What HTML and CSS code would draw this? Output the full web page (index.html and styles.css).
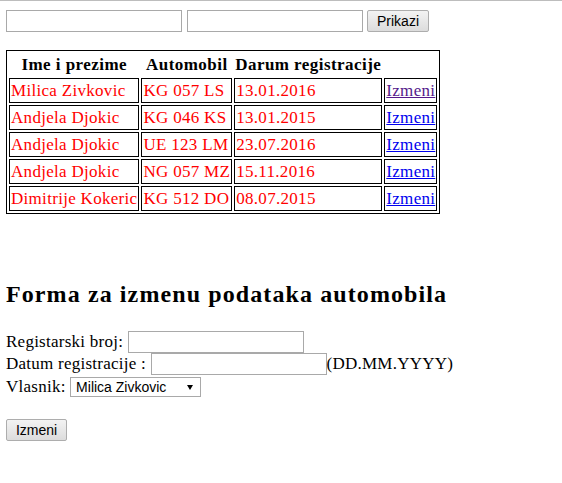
FILE: index.html
```html
<!DOCTYPE html>
<html>
<head>
<meta charset="utf-8">
<title>Automobili</title>
<link rel="stylesheet" href="styles.css">
</head>
<body>
<div class="top">
  <form class="search">
    <input type="text" class="field">
    <input type="text" class="field">
    <button type="button" class="btn btn-show">Prikazi</button>
  </form>
</div>

<table class="cars">
  <tr>
    <th>Ime i prezime</th>
    <th>Automobil</th>
    <th>Darum registracije</th>
    <th></th>
  </tr>
  <tr>
    <td>Milica Zivkovic</td>
    <td>KG 057 LS</td>
    <td>13.01.2016</td>
    <td><a href="#" class="link visited">Izmeni</a></td>
  </tr>
  <tr>
    <td>Andjela Djokic</td>
    <td>KG 046 KS</td>
    <td>13.01.2015</td>
    <td><a href="#" class="link">Izmeni</a></td>
  </tr>
  <tr>
    <td>Andjela Djokic</td>
    <td>UE 123 LM</td>
    <td>23.07.2016</td>
    <td><a href="#" class="link">Izmeni</a></td>
  </tr>
  <tr>
    <td>Andjela Djokic</td>
    <td>NG 057 MZ</td>
    <td>15.11.2016</td>
    <td><a href="#" class="link">Izmeni</a></td>
  </tr>
  <tr>
    <td>Dimitrije Kokeric</td>
    <td>KG 512 DO</td>
    <td>08.07.2015</td>
    <td><a href="#" class="link">Izmeni</a></td>
  </tr>
</table>

<h2 class="title">Forma za izmenu podataka automobila</h2>

<form class="edit">
  <div class="row row1">Registarski broj:&nbsp;<input type="text" class="field"></div>
  <div class="row row2">Datum registracije :&nbsp;<input type="text" class="field">(DD.MM.YYYY)</div>
  <div class="row row3">Vlasnik:&nbsp;<span class="select-wrap"><select class="select"><option>Milica Zivkovic</option><option>Andjela Djokic</option><option>Dimitrije Kokeric</option></select></span></div>
  <div class="actions"><button type="button" class="btn btn-edit">Izmeni</button></div>
</form>
</body>
</html>
```
FILE: styles.css
```css
html, body {
  background: #ffffff;
}
body {
  margin: 0;
  font-family: "Liberation Serif", "Times New Roman", serif;
  font-size: 17px;
  letter-spacing: 0.25px;
  color: #000;
}
.top {
  border-top: 1px solid #bdbdbd;
  padding: 9px 6px 0;
}
.search {
  display: flex;
  align-items: flex-start;
  margin: 0;
}
.field {
  box-sizing: border-box;
  width: 176px;
  height: 22px;
  margin: 0;
  padding: 1px 2px;
  border: 1px solid #a9a9a9;
  border-radius: 0;
  background: #fff;
  font-family: "Liberation Sans", Arial, sans-serif;
  font-size: 14px;
  letter-spacing: 0;
  outline: none;
}
.search .field + .field {
  margin-left: 5px;
}
.btn {
  box-sizing: border-box;
  height: 22px;
  margin: 0;
  padding: 0 6px;
  border: 1px solid #adadad;
  border-radius: 2px;
  background: linear-gradient(#f3f3f3, #dcdcdc);
  font-family: "Liberation Sans", Arial, sans-serif;
  font-size: 14px;
  letter-spacing: 0;
  color: #000;
  line-height: 18px;
}
.btn-show {
  width: 62px;
  margin-left: 4px;
}
.cars {
  margin: 18px 0 0 6px;
  border: 1px solid #000;
  border-spacing: 2px;
}
.cars th {
  padding: 1px;
  height: 21px;
  line-height: 21px;
  font-weight: bold;
  letter-spacing: 0.45px;
  text-align: center;
  white-space: nowrap;
}
.cars td {
  padding: 1px;
  height: 21px;
  line-height: 21px;
  border: 1px solid #000;
  color: #ff0000;
  letter-spacing: 0.3px;
  white-space: nowrap;
}
.link {
  color: #0000ee;
  text-decoration: underline;
}
.link.visited {
  color: #551a8b;
}
.title {
  margin: 66px 6px 23px;
  font-size: 24px;
  line-height: 28px;
  letter-spacing: 1.1px;
  font-weight: bold;
}
.edit {
  margin: 0;
  padding: 0 6px;
}
.row {
  display: flex;
  align-items: baseline;
  white-space: nowrap;
}
.row1 {
  height: 22px;
}
.row2 {
  height: 23px;
}
.row3 {
  height: 22px;
  padding-top: 1px;
}
.select-wrap {
  position: relative;
  display: inline-block;
}
.select {
  -webkit-appearance: none;
  appearance: none;
  box-sizing: border-box;
  width: 131px;
  height: 20px;
  margin: 0;
  padding: 0 18px 0 5px;
  border: 1px solid #a9a9a9;
  border-radius: 0;
  background: #fff;
  font-family: "Liberation Sans", Arial, sans-serif;
  font-size: 14px;
  letter-spacing: 0;
  color: #000;
  line-height: 18px;
}
.select-wrap::after {
  content: "";
  position: absolute;
  right: 8px;
  top: 8px;
  border-left: 3px solid transparent;
  border-right: 3px solid transparent;
  border-top: 5px solid #000;
  pointer-events: none;
}
.actions {
  padding-top: 20px;
}
.btn-edit {
  width: 61px;
}
```
